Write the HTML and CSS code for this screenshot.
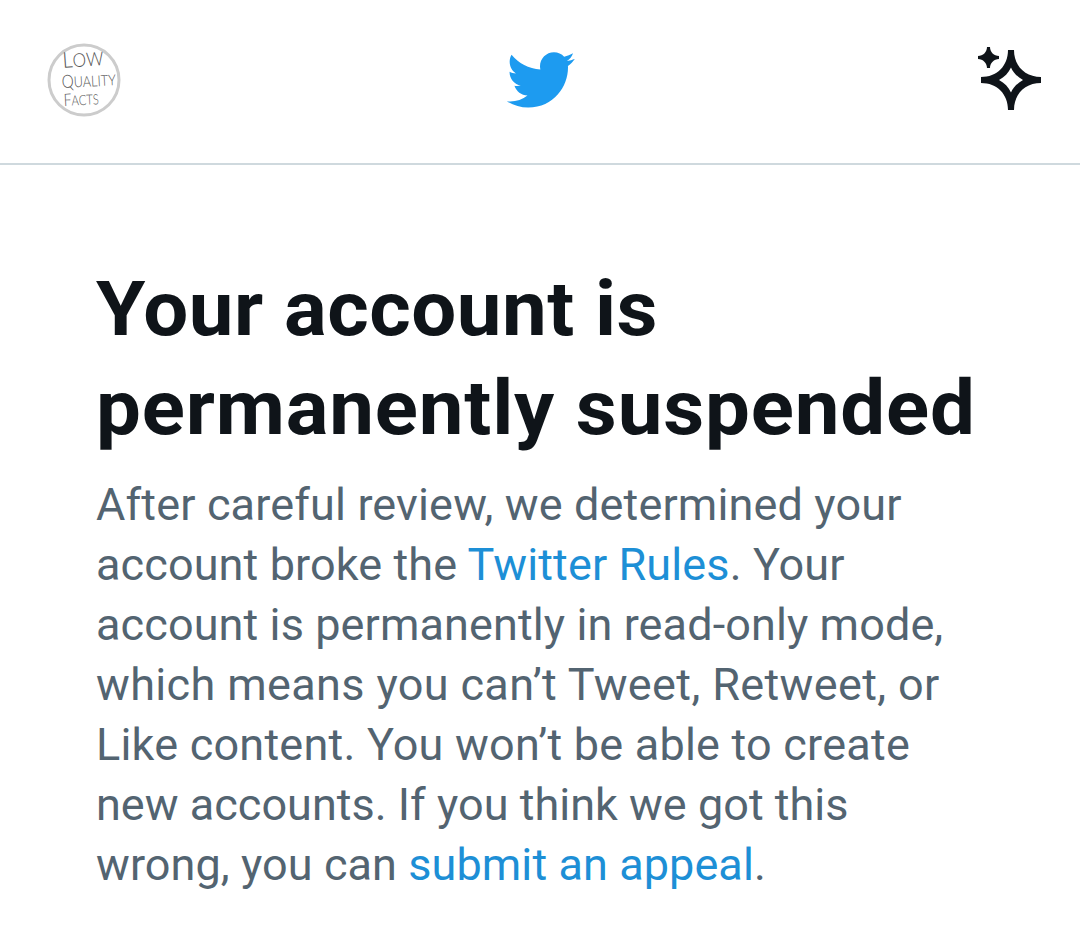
FILE: index.html
```html
<!DOCTYPE html>
<html lang="en">

<head>
    <meta charset="UTF-8">
    <meta name="viewport" content="width=device-width, initial-scale=1.0">

    <title>Account suspended</title>
    <link rel="stylesheet" href="styles.css">
</head>

<body>
    <header class="topbar">
        <svg class="avatar" viewBox="0 0 74 74">
            <circle cx="37" cy="37" r="35" />
            <text x="16" y="25" font-size="22" textLength="41" lengthAdjust="spacingAndGlyphs" transform="rotate(-4 16 25)">L<tspan font-size="19">OW</tspan></text>
            <text x="15" y="45" font-size="18" textLength="54" lengthAdjust="spacingAndGlyphs" transform="rotate(-3 15 45)">Q<tspan font-size="15">UALITY</tspan></text>
            <text x="17" y="63" font-size="17" textLength="35" lengthAdjust="spacingAndGlyphs" transform="rotate(-3 17 63)">F<tspan font-size="14">ACTS</tspan></text>
        </svg>

        <svg class="bird" viewBox="0 0 24 24">
            <path d="M23.643 4.937c-.835.37-1.732.62-2.675.733.962-.576 1.7-1.49 2.048-2.578-.9.534-1.897.922-2.958 1.13-.85-.904-2.06-1.47-3.4-1.47-2.572 0-4.658 2.086-4.658 4.66 0 .364.042.718.12 1.06-3.873-.195-7.304-2.05-9.602-4.868-.4.69-.63 1.49-.63 2.342 0 1.616.823 3.043 2.072 3.878-.764-.025-1.482-.234-2.11-.583v.06c0 2.257 1.605 4.14 3.737 4.568-.392.106-.803.162-1.227.162-.3 0-.593-.028-.877-.082.593 1.85 2.313 3.198 4.352 3.234-1.595 1.25-3.604 1.995-5.786 1.995-.376 0-.747-.022-1.112-.065 2.062 1.323 4.51 2.093 7.14 2.093 8.57 0 13.255-7.098 13.255-13.254 0-.2-.005-.402-.014-.602.91-.658 1.7-1.477 2.323-2.41z" />
        </svg>

        <svg class="sparkle" viewBox="0 0 63 63">
            <path d="M9 0h3c0 5 4 9 9 9v3c-5 0-9 4-9 9H9c0-5-4-9-9-9V9c5 0 9-4 9-9z" />
            <path fill-rule="evenodd" d="M30 3h6c0 16 11 27 27 27v6c-16 0-27 11-27 27h-6c0-16-11-27-27-27v-6c16 0 27-11 27-27zM33 20.500c-2.500 5.500-6.500 9.500-12 12.500 5.500 3 9.500 7 12 12.500 2.500-5.500 6.500-9.500 12-12.500-5.500-3-9.500-7-12-12.500z" />
        </svg>
    </header>

    <main class="content">
        <h1>
            <span class="line t1">Your account is</span>
            <span class="line t2">permanently suspended</span>
        </h1>
        <p>
            <span class="line l1">After careful review, we determined your</span>
            <span class="line l2">account broke the <a href="#">Twitter Rules</a>. Your</span>
            <span class="line l3">account is permanently in read-only mode,</span>
            <span class="line l4">which means you can’t Tweet, Retweet, or</span>
            <span class="line l5">Like content. You won’t be able to create</span>
            <span class="line l6">new accounts. If you think we got this</span>
            <span class="line l7">wrong, you can <a href="#">submit an appeal</a>.</span>
        </p>
    </main>
</body>

</html>
```
FILE: styles.css
```css
body {
    margin: 0;
    background-color: #fff;
    font-family: Roboto, "Liberation Sans", sans-serif;
}

.topbar {
    display: grid;
    grid-template-columns: 1fr auto 1fr;
    align-items: start;
    box-sizing: border-box;
    height: 165px;
    padding: 43px 39px 0 47px;
    border-bottom: 2px solid #cfd9de;
}

.avatar {
    width: 74px;
    height: 74px;
    overflow: visible;
}

.avatar circle {
    fill: #fff;
    stroke: #ccc;
    stroke-width: 3;
}

.avatar text {
    font-family: Lato, sans-serif;
    font-weight: 300;
    fill: #555;
}

.bird {
    width: 72px;
    height: 72px;
    margin: 1px 8px 0 0;
    fill: #1d9bf0;
}

.sparkle {
    width: 63px;
    height: 63px;
    margin-top: 4px;
    justify-self: end;
    fill: #0f1419;
}

.content {
    padding: 95px 96px 0;
}

h1 {
    margin: 0;
    font-size: 76px;
    line-height: 99px;
    font-weight: 700;
    color: #0f1419;
}

.line {
    display: block;
    width: max-content;
    white-space: nowrap;
}

/* slightly extended letterforms for the title */
.t1,
.t2 {
    transform: scaleX(1.05);
    transform-origin: 0 50%;
}

.t1 {
    letter-spacing: 0.45px;
}

.t2 {
    letter-spacing: 0.8px;
}

p {
    margin: 17px 0 0;
    font-size: 45px;
    line-height: 60px;
    color: #536471;
}

.l1 {
    letter-spacing: 0.15px;
}

.l2 {
    letter-spacing: 0.11px;
}

.l3 {
    letter-spacing: 0.1px;
}

.l4 {
    letter-spacing: 0.36px;
}

.l5 {
    letter-spacing: 0.22px;
}

.l6 {
    letter-spacing: 0.02px;
}

.l7 {
    letter-spacing: 0.08px;
}

a {
    color: #1d8fd6;
    text-decoration: none;
}
```
